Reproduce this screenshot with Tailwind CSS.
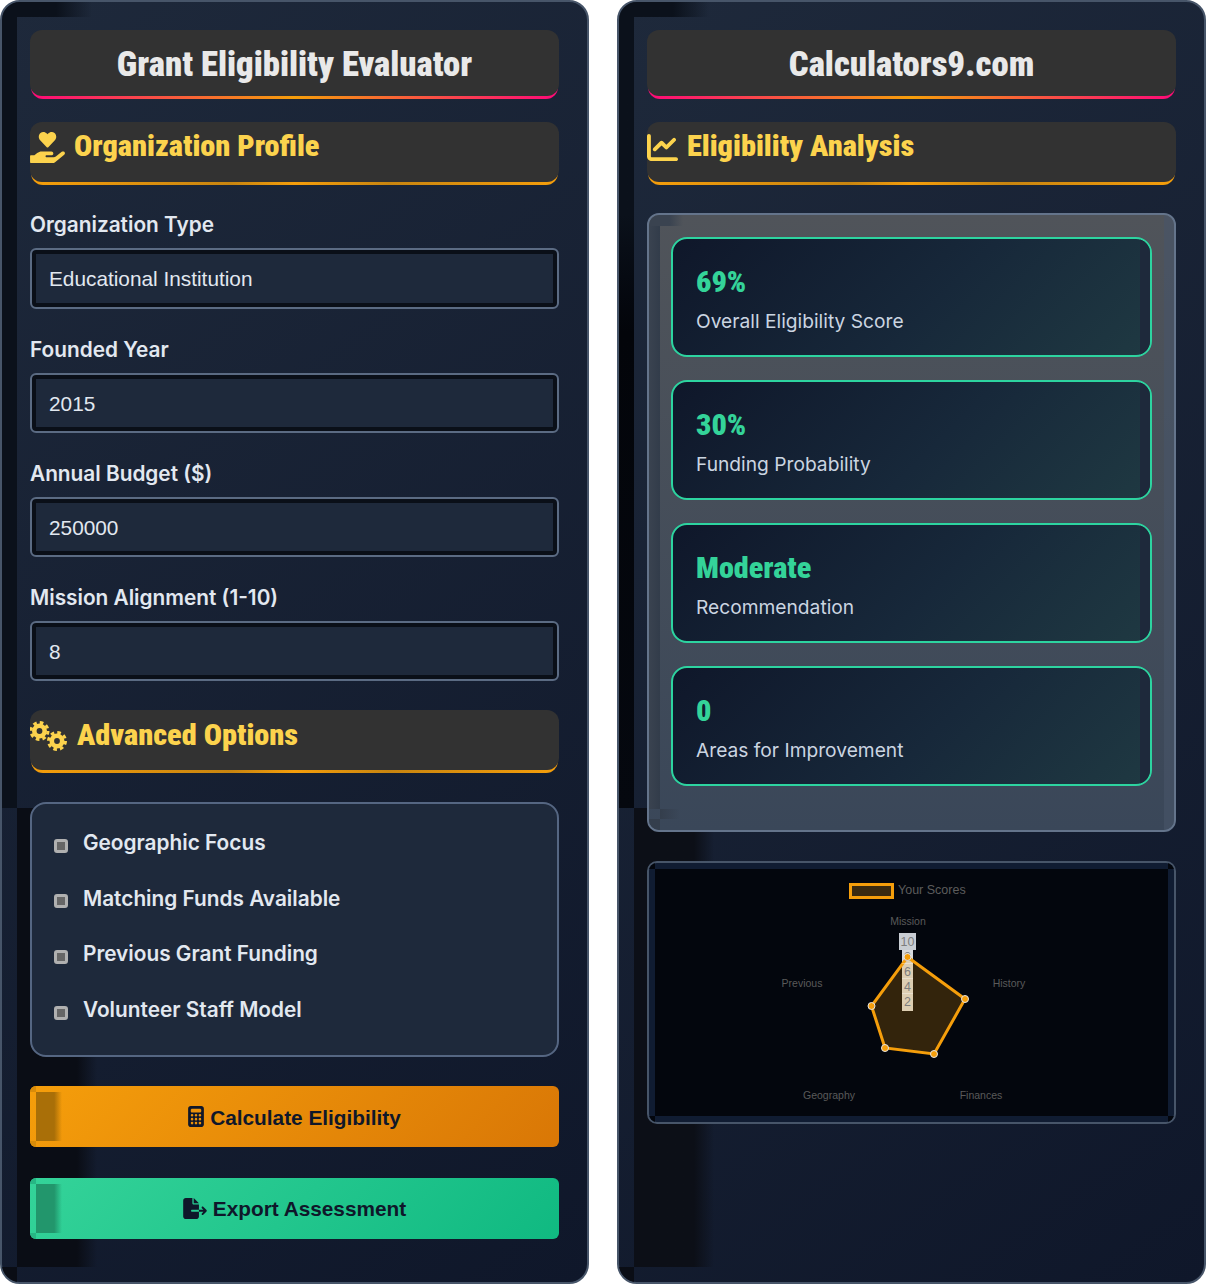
<!DOCTYPE html>
<html lang="en">
<head>
<meta charset="UTF-8">
<title>Grant Eligibility Evaluator</title>
<script src="https://cdn.jsdelivr.net/npm/@tailwindcss/browser@4"></script>
</head>
<body class="bg-white font-['Inter',sans-serif]">
<div class="grid grid-cols-2 gap-[28px] w-[1206px] h-[1284px]">

  <!-- Left panel -->
  <section class="relative overflow-hidden h-[1284px] rounded-[20px] border-2 border-[#475569] bg-[linear-gradient(145deg,#1e293b,#0f172a)] px-[28px] pt-[28px]">
    <!-- inset shadow tiles -->
    <div class="absolute left-0 top-0 w-[90px] h-[15px] bg-linear-to-r from-[#0b111b] from-60% to-transparent"></div>
    <div class="absolute left-0 top-[15px] w-[15px] h-[791px] bg-[#0b111b]"></div>
    <div class="absolute left-[15px] top-[806px] w-[80px] h-[459px] bg-linear-to-r from-[#0a0d15] from-75% to-transparent"></div>
    <div class="absolute left-0 top-[1265px] w-[15px] h-[15px] bg-[#0a0d15]"></div>

    <div class="relative">
      <header class="relative h-[69px]">
        <div class="absolute inset-x-[1px] bottom-0 h-6 rounded-b-xl bg-[linear-gradient(90deg,#ff0a78,#f59e0b,#ff0a78)]"></div>
        <div class="relative h-[66px] rounded-xl bg-[#323232] flex items-center justify-center pt-[2px]">
          <h1 class="text-[34.7px] font-black text-[#e9e9e9] font-['Roboto',sans-serif] [font-stretch:75%]">Grant Eligibility Evaluator</h1>
        </div>
      </header>

      <div class="relative h-[63px] mt-[23px]">
        <div class="absolute inset-x-[1px] bottom-0 h-6 rounded-b-xl bg-[linear-gradient(90deg,#f59e0b,#c88510_38%,#f59e0b_50%,#c88510_68%,#f59e0b)]"></div>
        <div class="relative h-[60px] rounded-xl bg-[#323232] flex items-start gap-[9px] pt-[5px]">
          <svg class="w-[35px] h-[31px] mt-[5px]" viewBox="0 0 576 512" fill="#fcd34d"><path d="M275.3 250.5c7 7.4 18.4 7.4 25.5 0l108.9-114.2c31.6-33.2 29.8-88.2-5.6-118.8-30.8-26.7-76.7-21.9-104.9 7.7L288 36.9l-11.1-11.6C248.7-4.4 202.8-9.2 172 17.5c-35.3 30.6-37.2 85.6-5.6 118.8l108.9 114.2zm290 77.6c-11.8-10.7-30.2-10-42.6 0L430.3 402c-11.3 9.1-25.4 14-40 14H272c-8.8 0-16-7.2-16-16s7.2-16 16-16h78.3c15.9 0 30.7-10.9 33.3-26.6 3.3-20-12.1-37.4-31.6-37.4H192c-27 0-53.1 9.3-74.1 26.3L71.4 384H16c-8.8 0-16 7.2-16 16v96c0 8.8 7.2 16 16 16h356.8c14.5 0 28.6-4.9 40-14l151.2-121c15.2-12.2 16.4-35 1.3-48.9z"/></svg>
          <h2 class="text-[30.3px] leading-[38px] font-black text-[#fcd34d] font-['Roboto',sans-serif] [font-stretch:75%]">Organization Profile</h2>
        </div>
      </div>

      <label class="block mt-[26px] h-[26px] text-[20.8px] leading-[28px] font-semibold text-[#e2e8f0]">Organization Type</label>
      <input value="Educational Institution" class="block w-full mt-[11px] h-[61px] rounded-md border-2 border-[#5b6b83] bg-[#1e293b] pl-[17px] text-[20.8px] text-[#e2e8f0] font-['Liberation_Sans',sans-serif] shadow-[inset_0_0_0_4px_#0a0f18]">

      <label class="block mt-[27px] h-[26px] text-[20.8px] leading-[28px] font-semibold text-[#e2e8f0]">Founded Year</label>
      <input value="2015" class="block w-full mt-[11px] h-[60px] rounded-md border-2 border-[#5b6b83] bg-[#1e293b] pl-[17px] pt-[2px] text-[20.8px] text-[#e2e8f0] font-['Liberation_Sans',sans-serif] shadow-[inset_0_0_0_4px_#0a0f18]">

      <label class="block mt-[27px] h-[26px] text-[20.8px] leading-[28px] font-semibold text-[#e2e8f0]">Annual Budget ($)</label>
      <input value="250000" class="block w-full mt-[11px] h-[60px] rounded-md border-2 border-[#5b6b83] bg-[#1e293b] pl-[17px] pt-[2px] text-[20.8px] text-[#e2e8f0] font-['Liberation_Sans',sans-serif] shadow-[inset_0_0_0_4px_#0a0f18]">

      <label class="block mt-[27px] h-[26px] text-[20.8px] leading-[28px] font-semibold text-[#e2e8f0]">Mission Alignment (1-10)</label>
      <input value="8" class="block w-full mt-[11px] h-[60px] rounded-md border-2 border-[#5b6b83] bg-[#1e293b] pl-[17px] pt-[2px] text-[20.8px] text-[#e2e8f0] font-['Liberation_Sans',sans-serif] shadow-[inset_0_0_0_4px_#0a0f18]">

      <div class="relative h-[63px] mt-[29px]">
        <div class="absolute inset-x-[1px] bottom-0 h-6 rounded-b-xl bg-[linear-gradient(90deg,#f59e0b,#c88510_38%,#f59e0b_50%,#c88510_68%,#f59e0b)]"></div>
        <div class="relative h-[60px] rounded-xl bg-[#323232] flex items-start gap-[10px] pt-[6px]">
          <svg class="w-[37px] h-[32px] mt-[5px]" viewBox="0 0 37 32" fill="none" stroke="#fcd34d">
            <circle cx="9.5" cy="10" r="5.2" stroke-width="4.6"/>
            <circle cx="9.5" cy="10" r="8.5" stroke-width="3" stroke-dasharray="3.6 3.08"/>
            <circle cx="27" cy="20" r="5.2" stroke-width="4.6"/>
            <circle cx="27" cy="20" r="8.5" stroke-width="3" stroke-dasharray="3.6 3.08"/>
          </svg>
          <h2 class="text-[30.3px] leading-[38px] font-black text-[#fcd34d] font-['Roboto',sans-serif] [font-stretch:75%]">Advanced Options</h2>
        </div>
      </div>

      <div class="mt-[29px] h-[255px] rounded-2xl border-2 border-[#556682] bg-[#1e293b] px-[22px] pt-[11px]">
        <div class="flex items-center gap-[15px] h-[55.6px]">
          <span class="w-[14px] h-[14px] mt-[6px] rounded-[3px] border-[3px] border-[#b0b0b0] bg-[#666]"></span>
          <span class="text-[20.8px] font-semibold text-[#e2e8f0]">Geographic Focus</span>
        </div>
        <div class="flex items-center gap-[15px] h-[55.6px]">
          <span class="w-[14px] h-[14px] mt-[6px] rounded-[3px] border-[3px] border-[#b0b0b0] bg-[#666]"></span>
          <span class="text-[20.8px] font-semibold text-[#e2e8f0]">Matching Funds Available</span>
        </div>
        <div class="flex items-center gap-[15px] h-[55.6px]">
          <span class="w-[14px] h-[14px] mt-[6px] rounded-[3px] border-[3px] border-[#b0b0b0] bg-[#666]"></span>
          <span class="text-[20.8px] font-semibold text-[#e2e8f0]">Previous Grant Funding</span>
        </div>
        <div class="flex items-center gap-[15px] h-[55.6px]">
          <span class="w-[14px] h-[14px] mt-[6px] rounded-[3px] border-[3px] border-[#b0b0b0] bg-[#666]"></span>
          <span class="text-[20.8px] font-semibold text-[#e2e8f0]">Volunteer Staff Model</span>
        </div>
      </div>

      <button class="relative overflow-hidden flex items-center justify-center gap-[6px] w-full h-[61px] mt-[29px] rounded-md bg-[linear-gradient(135deg,#f59e0b,#d97706)] text-[20.8px] font-bold text-[#0f172a] font-['Liberation_Sans',sans-serif]">
        <span class="absolute left-0 top-0 w-[6px] h-[6px] bg-[#d98c09]"></span>
        <span class="absolute left-0 bottom-0 w-[6px] h-[6px] bg-[#d98c09]"></span>
        <span class="absolute left-[6px] top-[6px] bottom-[6px] w-[26px] bg-linear-to-r from-[#a96f08] from-70% to-transparent"></span>
        <svg class="relative w-[16px] h-[21px]" viewBox="0 0 384 512" fill="#0f172a" fill-rule="evenodd"><path d="M64 0C28.7 0 0 28.7 0 64V448c0 35.3 28.7 64 64 64H320c35.3 0 64-28.7 64-64V64c0-35.3-28.7-64-64-64H64zM96 64H288c17.7 0 32 14.3 32 32v32c0 17.7-14.3 32-32 32H96c-17.7 0-32-14.3-32-32V96c0-17.7 14.3-32 32-32zM128 224a32 32 0 1 1-64 0 32 32 0 1 1 64 0zM224 224a32 32 0 1 1-64 0 32 32 0 1 1 64 0zM320 224a32 32 0 1 1-64 0 32 32 0 1 1 64 0zM128 320a32 32 0 1 1-64 0 32 32 0 1 1 64 0zM224 320a32 32 0 1 1-64 0 32 32 0 1 1 64 0zM320 320a32 32 0 1 1-64 0 32 32 0 1 1 64 0zM128 416a32 32 0 1 1-64 0 32 32 0 1 1 64 0zM224 416a32 32 0 1 1-64 0 32 32 0 1 1 64 0zM320 416a32 32 0 1 1-64 0 32 32 0 1 1 64 0z"/></svg>
        <span class="relative pt-[2px]">Calculate Eligibility</span>
      </button>

      <button class="relative overflow-hidden flex items-center justify-center gap-[6px] w-full h-[61px] mt-[31px] rounded-md bg-[linear-gradient(135deg,#34d399,#10b981)] text-[20.8px] font-bold text-[#0f172a] font-['Liberation_Sans',sans-serif]">
        <span class="absolute left-0 top-0 w-[6px] h-[6px] bg-[#27b684]"></span>
        <span class="absolute left-0 bottom-0 w-[6px] h-[6px] bg-[#27b684]"></span>
        <span class="absolute left-[6px] top-[6px] bottom-[6px] w-[26px] bg-linear-to-r from-[#22966c] from-70% to-transparent"></span>
        <svg class="relative w-[24px] h-[21px]" viewBox="0 0 576 512" fill="#0f172a"><path d="M0 64C0 28.7 28.7 0 64 0H224V128c0 17.7 14.3 32 32 32H384V288H216c-13.3 0-24 10.7-24 24s10.7 24 24 24H384V448c0 35.3-28.7 64-64 64H64c-35.3 0-64-28.7-64-64V64zM384 336V288H494.1l-39-39c-9.4-9.4-9.4-24.6 0-33.9s24.6-9.4 33.9 0l80 80c9.4 9.4 9.4 24.6 0 33.9l-80 80c-9.4 9.4-24.6 9.4-33.9 0s-9.4-24.6 0-33.9l39-39H384zm0-208H256V0L384 128z"/></svg>
        <span class="relative">Export Assessment</span>
      </button>
    </div>
  </section>

  <!-- Right panel -->
  <section class="relative overflow-hidden h-[1284px] rounded-[20px] border-2 border-[#475569] bg-[linear-gradient(145deg,#1e293b,#0f172a)] px-[28px] pt-[28px]">
    <div class="absolute left-0 top-0 w-[90px] h-[15px] bg-linear-to-r from-[#0b111b] from-60% to-transparent"></div>
    <div class="absolute left-0 top-[15px] w-[15px] h-[791px] bg-linear-to-b from-[#0b111b] from-25% via-[#03050a] via-40% to-[#05080f]"></div>
    <div class="absolute left-[15px] top-[806px] w-[80px] h-[459px] bg-linear-to-r from-[#0c0f17] from-75% to-transparent"></div>
    <div class="absolute left-0 top-[1265px] w-[15px] h-[15px] bg-[#0a0d15]"></div>

    <div class="relative">
      <header class="relative h-[69px]">
        <div class="absolute inset-x-[1px] bottom-0 h-6 rounded-b-xl bg-[linear-gradient(90deg,#ff0a78,#f59e0b,#ff0a78)]"></div>
        <div class="relative h-[66px] rounded-xl bg-[#323232] flex items-center justify-center pt-[2px]">
          <h1 class="text-[34.7px] font-black text-[#e9e9e9] font-['Roboto',sans-serif] [font-stretch:75%]">Calculators9.com</h1>
        </div>
      </header>

      <div class="relative h-[63px] mt-[23px]">
        <div class="absolute inset-x-[1px] bottom-0 h-6 rounded-b-xl bg-[linear-gradient(90deg,#f59e0b,#c88510_38%,#f59e0b_50%,#c88510_68%,#f59e0b)]"></div>
        <div class="relative h-[60px] rounded-xl bg-[#323232] flex items-start gap-[9px] pt-[5px]">
          <svg class="w-[31px] h-[31px] mt-[5px]" viewBox="0 0 512 512" fill="#fcd34d"><path d="M64 64c0-17.7-14.3-32-32-32S0 46.3 0 64V400c0 44.2 35.8 80 80 80H480c17.7 0 32-14.3 32-32s-14.3-32-32-32H80c-8.8 0-16-7.2-16-16V64zm406.6 86.6c12.5-12.5 12.5-32.8 0-45.3s-32.8-12.5-45.3 0L320 210.7l-57.4-57.4c-12.5-12.5-32.8-12.5-45.3 0l-112 112c-12.5 12.5-12.5 32.8 0 45.3s32.8 12.5 45.3 0L240 221.3l57.4 57.4c12.5 12.5 32.8 12.5 45.3 0l128-128z"/></svg>
          <h2 class="text-[30.3px] leading-[38px] font-black text-[#fcd34d] font-['Roboto',sans-serif] [font-stretch:75%]">Eligibility Analysis</h2>
        </div>
      </div>

      <div class="relative overflow-hidden mt-[28px] h-[619px] rounded-xl border-2 border-[#64748b] bg-[linear-gradient(180deg,#50545a,#3a4759)] p-[22px]">
        <div class="absolute left-0 top-0 w-[34px] h-[11px] bg-linear-to-r from-[#3a4350] from-60% to-transparent"></div>
        <div class="absolute left-0 top-[11px] w-[11px] h-[583px] bg-linear-to-r from-[#3a4350] to-[#323c4a]"></div>
        <div class="absolute left-[11px] top-[594px] w-[20px] h-[10px] bg-linear-to-r from-[#343e4c] to-transparent"></div>
        <div class="absolute left-0 top-[604px] w-[11px] h-[11px] bg-[#343e4c]"></div>
        <div class="absolute right-0 top-0 w-[10px] h-full bg-[#475569]/60"></div>

        <div class="relative flex flex-col gap-[23px]">
          <div class="relative overflow-hidden h-[120px] rounded-2xl border-2 border-[#2dd4a0] bg-[linear-gradient(135deg,#0f172a,#17283a_55%,#1f3942)] pl-[23px] pt-[24px]">
            <div class="absolute right-0 top-0 bottom-0 w-[10px] bg-[#1e293b]"></div>
            <div class="text-[30.2px] leading-[38px] font-black text-[#34d399] font-['Roboto',sans-serif] [font-stretch:75%]">69%</div>
            <div class="mt-[7px] text-[19.2px] leading-[26px] font-normal text-[#cbd5e1]">Overall Eligibility Score</div>
          </div>
          <div class="relative overflow-hidden h-[120px] rounded-2xl border-2 border-[#2dd4a0] bg-[linear-gradient(135deg,#0f172a,#17283a_55%,#1f3942)] pl-[23px] pt-[24px]">
            <div class="absolute right-0 top-0 bottom-0 w-[10px] bg-[#1e293b]"></div>
            <div class="text-[30.2px] leading-[38px] font-black text-[#34d399] font-['Roboto',sans-serif] [font-stretch:75%]">30%</div>
            <div class="mt-[7px] text-[19.2px] leading-[26px] font-normal text-[#cbd5e1]">Funding Probability</div>
          </div>
          <div class="relative overflow-hidden h-[120px] rounded-2xl border-2 border-[#2dd4a0] bg-[linear-gradient(135deg,#0f172a,#17283a_55%,#1f3942)] pl-[23px] pt-[24px]">
            <div class="absolute right-0 top-0 bottom-0 w-[10px] bg-[#1e293b]"></div>
            <div class="text-[30.2px] leading-[38px] font-black text-[#34d399] font-['Roboto',sans-serif] [font-stretch:75%]">Moderate</div>
            <div class="mt-[7px] text-[19.2px] leading-[26px] font-normal text-[#cbd5e1]">Recommendation</div>
          </div>
          <div class="relative overflow-hidden h-[120px] rounded-2xl border-2 border-[#2dd4a0] bg-[linear-gradient(135deg,#0f172a,#17283a_55%,#1f3942)] pl-[23px] pt-[24px]">
            <div class="absolute right-0 top-0 bottom-0 w-[10px] bg-[#1e293b]"></div>
            <div class="text-[30.2px] leading-[38px] font-black text-[#34d399] font-['Roboto',sans-serif] [font-stretch:75%]">0</div>
            <div class="mt-[7px] text-[19.2px] leading-[26px] font-normal text-[#cbd5e1]">Areas for Improvement</div>
          </div>
        </div>
      </div>

      <!-- radar chart: svg coordinates are x-656, y-870 from the page -->
      <div class="relative overflow-hidden mt-[29px] h-[263px] rounded-[10px] border-2 border-[#475569] bg-[#101c32] p-[6px]">
        <span class="absolute left-0 top-0 w-[6px] h-[6px] bg-[#03060d]"></span>
        <span class="absolute right-0 top-0 w-[6px] h-[6px] bg-[#03060d]"></span>
        <span class="absolute left-0 bottom-0 w-[6px] h-[6px] bg-[#03060d]"></span>
        <span class="absolute right-0 bottom-0 w-[6px] h-[6px] bg-[#03060d]"></span>
        <svg class="block w-full h-full bg-[#03060d] font-['Liberation_Sans',sans-serif]" viewBox="-1 -1 513 247">
          <rect x="194.5" y="14.5" width="42" height="13" fill="#3a2a10" stroke="#f59e0b" stroke-width="3"/>
          <text x="242" y="24" font-size="12.5" fill="#5c5c5c">Your Scores</text>
          <g font-size="10.5" fill="#5a5a5a" text-anchor="middle">
            <text x="252" y="55">Mission</text>
            <text x="353" y="117">History</text>
            <text x="325" y="229">Finances</text>
            <text x="173" y="229">Geography</text>
            <text x="146" y="117">Previous</text>
          </g>
          <rect x="243" y="63" width="17" height="17" fill="#c9cdd3"/>
          <rect x="246" y="80" width="11" height="61" fill="#d8dadd"/>
          <polygon points="251.5,87 309,129 278,184 229,178 215.5,136" fill="#f59e0b" fill-opacity="0.2" stroke="#f59e0b" stroke-width="3"/>
          <g fill="#ffffff" fill-opacity="0.35">
            <rect x="246" y="93" width="11" height="1"/>
            <rect x="246" y="108" width="11" height="1"/>
            <rect x="246" y="123" width="11" height="1"/>
          </g>
          <g font-size="12.5" fill="#7d7d7d" text-anchor="middle">
            <text x="251.5" y="76">10</text>
            <text x="251.5" y="91">8</text>
            <text x="251.5" y="106">6</text>
            <text x="251.5" y="121">4</text>
            <text x="251.5" y="136">2</text>
          </g>
          <g fill="#f59e0b" stroke="#e5e5e5" stroke-width="1">
            <circle cx="251.5" cy="87" r="3.5"/>
            <circle cx="309" cy="129" r="3.5"/>
            <circle cx="278" cy="184" r="3.5"/>
            <circle cx="229" cy="178" r="3.5"/>
            <circle cx="215.5" cy="136" r="3.5"/>
          </g>
        </svg>
      </div>
    </div>
  </section>
</div>
</body>
</html>
